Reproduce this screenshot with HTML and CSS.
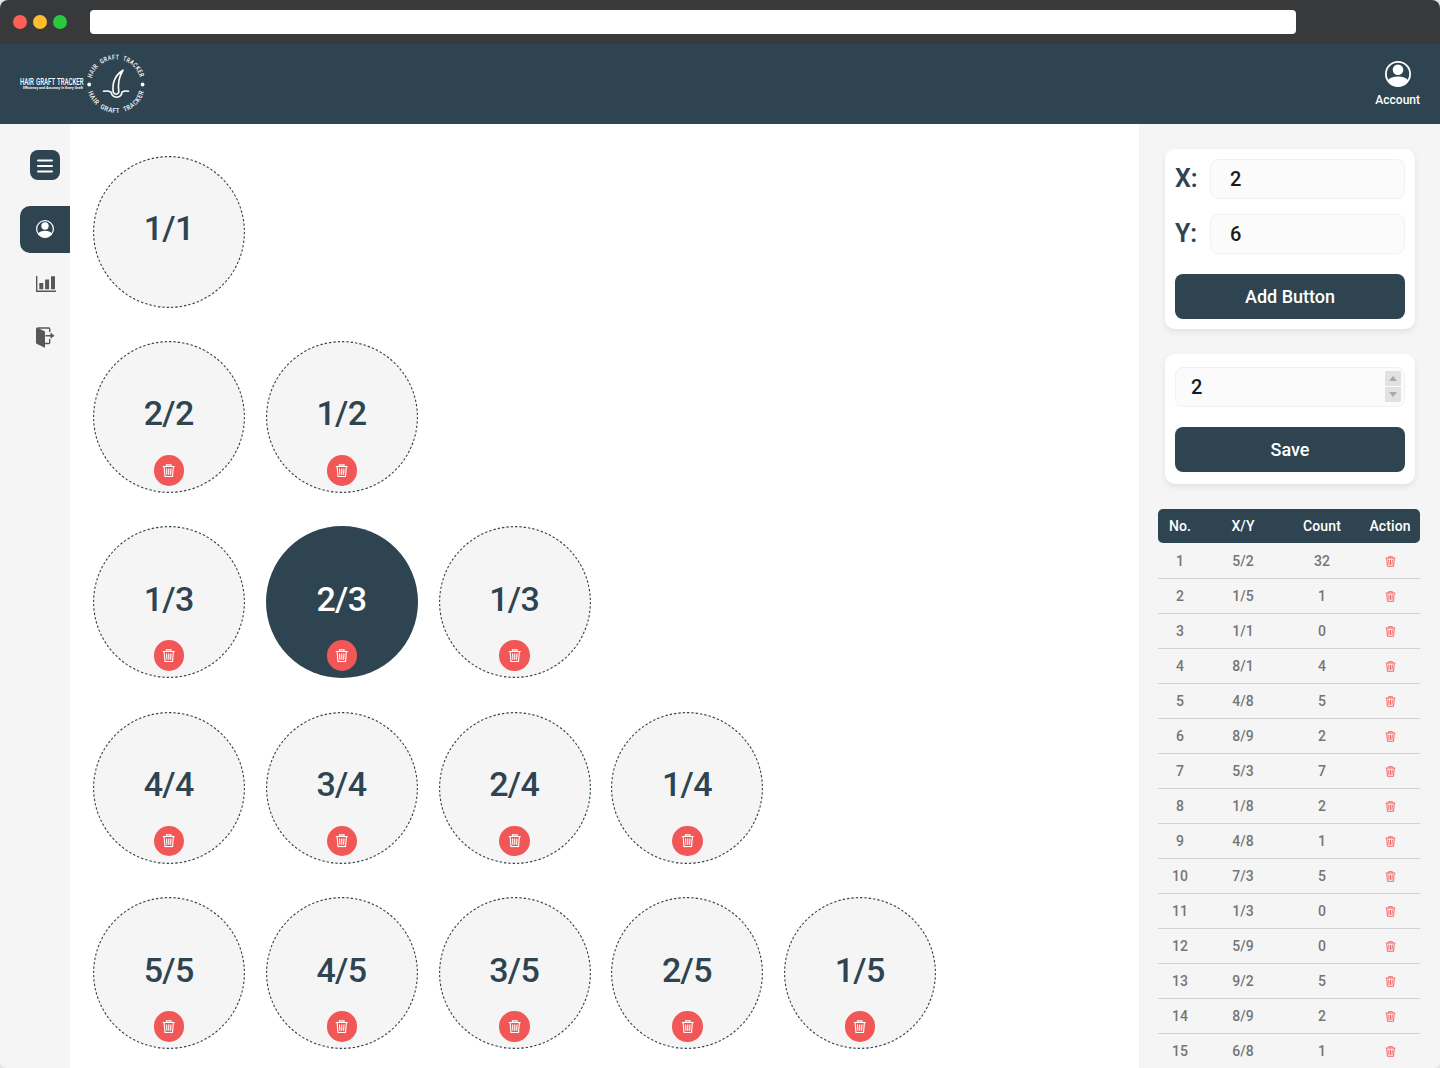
FILE: index.html
```html
<!DOCTYPE html>
<html lang="en">
<head>
<meta charset="utf-8">
<title>Hair Graft Tracker</title>
<link rel="stylesheet" href="styles.css">
</head>
<body>
<svg class="sprite" width="0" height="0" aria-hidden="true">
  <symbol id="trash" viewBox="0 0 14 14">
    <path d="M.8 2.6h12.4M4.6 2.4V.9h4.8v1.500M2.200 2.800l.9 10.300h7.800l.9-10.300M4.700 4.700l.4 6.500M7 4.700v6.500M9.300 4.700l-.4 6.500" fill="none" stroke="currentColor" stroke-width="1.15"/>
  </symbol>
  <symbol id="user" viewBox="0 0 26 26">
    <clipPath id="disc"><circle cx="13" cy="13" r="12.5"/></clipPath>
    <circle cx="13" cy="13" r="12.1" fill="none" stroke="currentColor" stroke-width="1.8"/>
    <circle cx="13" cy="8.7" r="5.3" fill="currentColor"/>
    <path d="M2.4 19.8Q6 15.6 13 15.6T23.6 19.8V26H2.4z" fill="currentColor" clip-path="url(#disc)"/>
  </symbol>
  <symbol id="ring" viewBox="0 0 152 152">
    <circle cx="76" cy="76" r="75.4" fill="#f5f5f5" stroke="#2e4350" stroke-width="1.1" pathLength="540" stroke-dasharray="2.7 2.3"/>
  </symbol>
</svg>
<div class="window">
  <div class="chrome">
    <span class="dot red"></span><span class="dot amber"></span><span class="dot green"></span>
    <div class="address"></div>
  </div>
  <header class="topbar">
    <div class="brand">
      <svg class="wordmark" viewBox="0 0 66 20" width="66" height="20">
        <text x="0" y="11.4" class="brand-name" textLength="63.5" lengthAdjust="spacingAndGlyphs">HAIR GRAFT TRACKER</text>
        <text x="3" y="15.3" class="brand-tag" textLength="60" lengthAdjust="spacingAndGlyphs">Efficiency and Accuracy In Every Graft</text>
      </svg>
      <svg class="emblem" viewBox="0 0 60 60" width="60" height="60">
        <path id="arc-top" d="M5.8 24.2A25 25 0 0 1 54.2 24.2" fill="none"/>
        <path id="arc-bottom" d="M1.8 37.3A29.200 29.200 0 0 0 58.200 37.300" fill="none"/>
        <text class="ring-text"><textPath href="#arc-top" startOffset="0" textLength="65" lengthAdjust="spacingAndGlyphs">HAIR GRAFT TRACKER</textPath></text>
        <text class="ring-text"><textPath href="#arc-bottom" startOffset="1" textLength="75" lengthAdjust="spacingAndGlyphs">HAIR GRAFT TRACKER</textPath></text>
        <circle cx="3.200" cy="30.500" r="1.900" fill="#fff"/><circle cx="56.600" cy="30.500" r="1.900" fill="#fff"/>
        <path d="M17.500 37.300q4.500-1 7.500.9c1.500 6.700 10 6.700 11 0q2.500-1.900 6.500-.9M27.300 38.500c-1.300-9 1.200-17 9.700-22.300-3.800 6-5.300 14.300-4.200 22.300q-2.700 3.500-5.500 0" fill="none" stroke="#fff" stroke-width="1.600" stroke-linecap="round" stroke-linejoin="round"/>
      </svg>
    </div>
    <a class="account"><svg width="26" height="26"><use href="#user"/></svg><span>Account</span></a>
  </header>
  <div class="layout">
    <nav class="sidebar">
      <button class="menu" aria-label="Menu"><svg width="16" height="14" viewBox="0 0 16 14"><path d="M1 1.400h14M1 7h14M1 12.600h14" stroke="#fff" stroke-width="2" stroke-linecap="round"/></svg></button>
      <a class="nav-item active"><svg width="18" height="18"><use href="#user"/></svg></a>
      <a class="nav-item"><svg width="20" height="16" viewBox="0 0 20 16" fill="#575757"><path d="M0 0h1.400v14.500H20V16H0zM3.300 7h4v6.300h-4zM9.100 3.500h4v9.800h-4zM15 .3h4v13h-4z"/></svg></a>
      <a class="nav-item"><svg width="20" height="21" viewBox="0 0 20 21"><path d="M0 1.500Q0 .5 1 .5L9 4.500v16.300L1 17Q0 16.500 0 15.500z" fill="#575757"/><path d="M1.500 1H12.700q1 0 1 1V5M13.700 12v3.500q0 1-1 1H9M9.500 8.700h7" fill="none" stroke="#575757" stroke-width="1.400"/><path d="M14.500 5.600l4 3.100-4 3.100z" fill="#575757"/></svg></a>
    </nav>
    <main class="board">
      <div class="row">
        <div class="graft"><svg class="ring"><use href="#ring"/></svg><span>1/1</span></div>
      </div>
      <div class="row">
        <div class="graft"><svg class="ring"><use href="#ring"/></svg><span>2/2</span><button class="del"><svg><use href="#trash"/></svg></button></div>
        <div class="graft"><svg class="ring"><use href="#ring"/></svg><span>1/2</span><button class="del"><svg><use href="#trash"/></svg></button></div>
      </div>
      <div class="row">
        <div class="graft"><svg class="ring"><use href="#ring"/></svg><span>1/3</span><button class="del"><svg><use href="#trash"/></svg></button></div>
        <div class="graft selected"><span>2/3</span><button class="del"><svg><use href="#trash"/></svg></button></div>
        <div class="graft"><svg class="ring"><use href="#ring"/></svg><span>1/3</span><button class="del"><svg><use href="#trash"/></svg></button></div>
      </div>
      <div class="row">
        <div class="graft"><svg class="ring"><use href="#ring"/></svg><span>4/4</span><button class="del"><svg><use href="#trash"/></svg></button></div>
        <div class="graft"><svg class="ring"><use href="#ring"/></svg><span>3/4</span><button class="del"><svg><use href="#trash"/></svg></button></div>
        <div class="graft"><svg class="ring"><use href="#ring"/></svg><span>2/4</span><button class="del"><svg><use href="#trash"/></svg></button></div>
        <div class="graft"><svg class="ring"><use href="#ring"/></svg><span>1/4</span><button class="del"><svg><use href="#trash"/></svg></button></div>
      </div>
      <div class="row">
        <div class="graft"><svg class="ring"><use href="#ring"/></svg><span>5/5</span><button class="del"><svg><use href="#trash"/></svg></button></div>
        <div class="graft"><svg class="ring"><use href="#ring"/></svg><span>4/5</span><button class="del"><svg><use href="#trash"/></svg></button></div>
        <div class="graft"><svg class="ring"><use href="#ring"/></svg><span>3/5</span><button class="del"><svg><use href="#trash"/></svg></button></div>
        <div class="graft"><svg class="ring"><use href="#ring"/></svg><span>2/5</span><button class="del"><svg><use href="#trash"/></svg></button></div>
        <div class="graft"><svg class="ring"><use href="#ring"/></svg><span>1/5</span><button class="del"><svg><use href="#trash"/></svg></button></div>
      </div>
    </main>
    <aside class="panel">
      <section class="card">
        <div class="field"><b>X:</b><div class="input">2</div></div>
        <div class="field"><b>Y:</b><div class="input">6</div></div>
        <button class="primary">Add Button</button>
      </section>
      <section class="card save">
        <div class="input number">2<span class="spin"><i class="up"></i><i class="down"></i></span></div>
        <button class="primary">Save</button>
      </section>
      <div class="table">
        <div class="tr head"><span>No.</span><span>X/Y</span><span>Count</span><span>Action</span></div>
        <div class="tr"><span>1</span><span>5/2</span><span>32</span><svg><use href="#trash"/></svg></div>
        <div class="tr"><span>2</span><span>1/5</span><span>1</span><svg><use href="#trash"/></svg></div>
        <div class="tr"><span>3</span><span>1/1</span><span>0</span><svg><use href="#trash"/></svg></div>
        <div class="tr"><span>4</span><span>8/1</span><span>4</span><svg><use href="#trash"/></svg></div>
        <div class="tr"><span>5</span><span>4/8</span><span>5</span><svg><use href="#trash"/></svg></div>
        <div class="tr"><span>6</span><span>8/9</span><span>2</span><svg><use href="#trash"/></svg></div>
        <div class="tr"><span>7</span><span>5/3</span><span>7</span><svg><use href="#trash"/></svg></div>
        <div class="tr"><span>8</span><span>1/8</span><span>2</span><svg><use href="#trash"/></svg></div>
        <div class="tr"><span>9</span><span>4/8</span><span>1</span><svg><use href="#trash"/></svg></div>
        <div class="tr"><span>10</span><span>7/3</span><span>5</span><svg><use href="#trash"/></svg></div>
        <div class="tr"><span>11</span><span>1/3</span><span>0</span><svg><use href="#trash"/></svg></div>
        <div class="tr"><span>12</span><span>5/9</span><span>0</span><svg><use href="#trash"/></svg></div>
        <div class="tr"><span>13</span><span>9/2</span><span>5</span><svg><use href="#trash"/></svg></div>
        <div class="tr"><span>14</span><span>8/9</span><span>2</span><svg><use href="#trash"/></svg></div>
        <div class="tr"><span>15</span><span>6/8</span><span>1</span><svg><use href="#trash"/></svg></div>
      </div>
    </aside>
  </div>
</div>
</body>
</html>
```
FILE: styles.css
```css
* { box-sizing: border-box; }
body { margin: 0; background: #e6e6e6; font-family: Roboto, "Liberation Sans", sans-serif; font-weight: 500; }
button { border: 0; padding: 0; font: inherit; }
svg { display: block; }
.sprite { position: absolute; }
.window { height: 1068px; display: flex; flex-direction: column; overflow: hidden; border-radius: 8px; background: #fff; }

.chrome { flex: none; height: 44px; background: #38393a; display: flex; align-items: center; padding-left: 13px; gap: 6px; }
.dot { width: 14px; height: 14px; border-radius: 50%; }
.red { background: #ff5f57; }
.amber { background: #febc2e; }
.green { background: #28c840; }
.address { width: 1206px; height: 24px; margin-left: 17px; background: #fff; border-radius: 4px; }

.topbar { flex: none; height: 80px; background: #2e4451; color: #fff; display: flex; justify-content: space-between; align-items: center; padding: 0 20px; }
.brand { display: flex; align-items: center; }
.brand svg { fill: #fff; overflow: visible; }
.brand-name { font: 500 9px Roboto, sans-serif; word-spacing: 1px; }
.brand-tag { font: 700 3.7px "Open Sans", sans-serif; }
.ring-text { font: 500 6.8px Roboto, sans-serif; word-spacing: 2.5px; letter-spacing: .6px; }
.account { display: flex; flex-direction: column; align-items: center; gap: 6px; font-size: 12px; line-height: 14px; }
.account svg { margin-left: 1px; }

.layout { flex: 1; min-height: 0; display: flex; }
.sidebar { width: 70px; background: #f5f5f5; display: flex; flex-direction: column; align-items: flex-end; padding-top: 26px; }
.menu { width: 30px; height: 30px; margin: 0 10px 26px 0; padding-top: 1px; border-radius: 8px; background: #2e4451; display: grid; place-items: center; }
.nav-item { width: 50px; height: 47px; margin-bottom: 7px; padding-left: 16px; display: flex; align-items: center; }
.nav-item.active { background: #2e4451; color: #fff; border-radius: 10px 0 0 10px; padding-bottom: 1px; }
.nav-item svg { flex: none; }

.board { flex: 1; padding: 31.500px 0 0 23px; display: flex; flex-direction: column; gap: 33.400px; }
.row { display: flex; gap: 20.750px; }
.graft { flex: none; position: relative; width: 152px; height: 152px; border-radius: 50%; color: #2e4451; text-align: center; font-size: 34px; line-height: 40px; letter-spacing: -.6px; padding: 52.500px .6px 0 0; }
.graft.selected { background: #2e4451; color: #fff; }
.graft span { position: relative; }
.ring { position: absolute; inset: 0; width: 152px; height: 152px; }
.del { position: absolute; left: 60.800px; top: 114.200px; width: 30.500px; height: 30.500px; border-radius: 50%; background: #f25757; color: #fff; display: grid; place-items: center; }
.del svg { width: 13.500px; height: 13.500px; }

.panel { width: 301px; background: #f5f5f5; padding: 25px 20px 0 19px; }
.card { width: 250px; height: 180px; margin: 0 auto 25px 7px; padding: 10px; background: #fff; border-radius: 10px; box-shadow: 0 3px 6px rgba(0, 0, 0, .08); }
.field { display: flex; align-items: center; margin-bottom: 15px; }
.field b { width: 35px; color: #2e4451; font-size: 25px; line-height: 30px; font-weight: 600; }
.input { flex: 1; height: 40px; border: 1px solid #f1f1f1; border-radius: 8px; background: #fbfbfb; padding-left: 19px; color: #1a1a1a; font-size: 20px; line-height: 38px; }
.primary { display: block; width: 230px; height: 45px; margin-top: 20px; border-radius: 8px; background: #2e4451; color: #fff; font-size: 18px; }
.save { height: 130px; padding-top: 13px; }
.number { display: flex; justify-content: space-between; padding: 0 3px 0 15px; }
.spin { width: 16px; display: flex; flex-direction: column; gap: 1px; margin-top: 3px; }
.spin i { height: 15px; background: #e1e1e1; border-radius: 1px; display: grid; place-items: center; }
.spin i::after { content: ""; border: 4px solid transparent; }
.spin .up::after { border-top: 0; border-bottom: 5px solid #aaa; }
.spin .down::after { border-bottom: 0; border-top: 5px solid #aaa; }

.table { width: 262px; font-size: 14px; }
.tr { height: 35px; display: grid; grid-template-columns: 44px 82px 76px 60px; align-items: center; text-align: center; color: #757575; border-bottom: 1px solid #d2d2d2; letter-spacing: .1px; }
.tr.head { height: 34px; margin-bottom: 1px; border: 0; border-radius: 5px; background: #2e4451; color: #fff; }
.tr svg { width: 11px; height: 11px; margin: 1px auto 0; color: #f25757; }
```
